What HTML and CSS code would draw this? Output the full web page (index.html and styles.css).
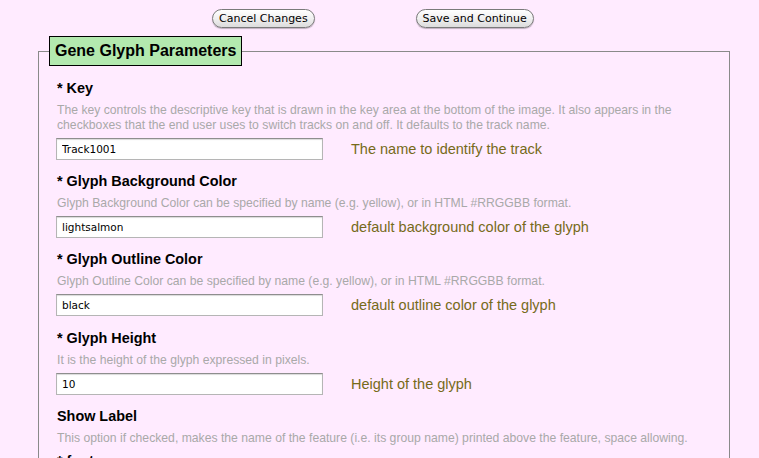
FILE: index.html
```html
<!DOCTYPE html>
<html>
<head>
<meta charset="utf-8">
<link rel="stylesheet" href="styles.css">
</head>
<body>
<div class="actions">
  <button class="btn">Cancel Changes</button>
  <button class="btn">Save and Continue</button>
</div>
<fieldset class="panel">
  <legend class="panel-title">Gene Glyph Parameters</legend>

  <div class="field">
    <div class="field-title">* Key</div>
    <div class="field-desc">The key controls the descriptive key that is drawn in the key area at the bottom of the image. It also appears in the checkboxes that the end user uses to switch tracks on and off. It defaults to the track name.</div>
    <div class="field-row">
      <input class="field-input" type="text" value="Track1001">
      <span class="field-hint">The name to identify the track</span>
    </div>
  </div>

  <div class="field">
    <div class="field-title">* Glyph Background Color</div>
    <div class="field-desc">Glyph Background Color can be specified by name (e.g. yellow), or in HTML #RRGGBB format.</div>
    <div class="field-row">
      <input class="field-input" type="text" value="lightsalmon">
      <span class="field-hint">default background color of the glyph</span>
    </div>
  </div>

  <div class="field">
    <div class="field-title">* Glyph Outline Color</div>
    <div class="field-desc">Glyph Outline Color can be specified by name (e.g. yellow), or in HTML #RRGGBB format.</div>
    <div class="field-row">
      <input class="field-input" type="text" value="black">
      <span class="field-hint">default outline color of the glyph</span>
    </div>
  </div>

  <div class="field">
    <div class="field-title">* Glyph Height</div>
    <div class="field-desc">It is the height of the glyph expressed in pixels.</div>
    <div class="field-row">
      <input class="field-input" type="text" value="10">
      <span class="field-hint">Height of the glyph</span>
    </div>
  </div>

  <div class="field">
    <div class="field-title plain">Show Label</div>
    <div class="field-desc">This option if checked, makes the name of the feature (i.e. its group name) printed above the feature, space allowing.</div>
  </div>

  <div class="field tight">
    <div class="field-title">* font</div>
  </div>
</fieldset>
</body>
</html>
```

FILE: styles.css
```css
html, body {
  margin: 0;
  padding: 0;
  background: #ffebff;
}

body {
  font-family: "Liberation Sans", Arial, sans-serif;
  color: #000;
}

.actions {
  display: flex;
  gap: 101px;
  padding: 9px 0 0 212px;
  height: 19px;
}

.btn {
  height: 19px;
  padding: 0 6px;
  border: 1px solid #7a7a7a;
  border-radius: 10px;
  background: linear-gradient(#ffffff, #f0f0f0 50%, #dcdcdc);
  box-shadow: 0 1px 1px rgba(0,0,0,0.25);
  font-family: "DejaVu Sans", sans-serif;
  font-size: 11px;
  line-height: 17px;
  color: #000;
}

.panel {
  box-sizing: border-box;
  width: 692px;
  margin: 8px 0 0 38px;
  padding: 13px 18px 0 18px;
  border: 1px solid #8a8a8a;
  min-width: 0;
}

.panel-title {
  margin-left: -8px;
  padding: 0 5px;
  height: 28px;
  line-height: 28px;
  background: #b3e9af;
  border: 1px solid #000;
  font-size: 16px;
  font-weight: bold;
}

.field {
  margin-bottom: 12px;
}

.field:nth-child(4) {
  margin-bottom: 13px;
}

.field.tight {
  margin-top: -6px;
}

.field-title {
  font-size: 14.4px;
  font-weight: bold;
  line-height: 18px;
}

.field-desc {
  margin-top: 6px;
  font-size: 12.2px;
  line-height: 15px;
  color: #a9a9a9;
}

.field-row {
  display: flex;
  align-items: center;
  gap: 28px;
  margin: 5px 0 0 -1px;
}

.field-input {
  box-sizing: border-box;
  width: 267px;
  height: 22px;
  margin: 0;
  padding: 0 5px;
  border: 1px solid #b5b5b5;
  border-top-color: #8e8e8e;
  box-shadow: inset 0 1px 1px rgba(0,0,0,0.15);
  background: #fff;
  font-family: "DejaVu Sans", sans-serif;
  font-size: 10.5px;
  color: #000;
}

.field-hint {
  font-size: 14.5px;
  color: #766a1a;
}
```
